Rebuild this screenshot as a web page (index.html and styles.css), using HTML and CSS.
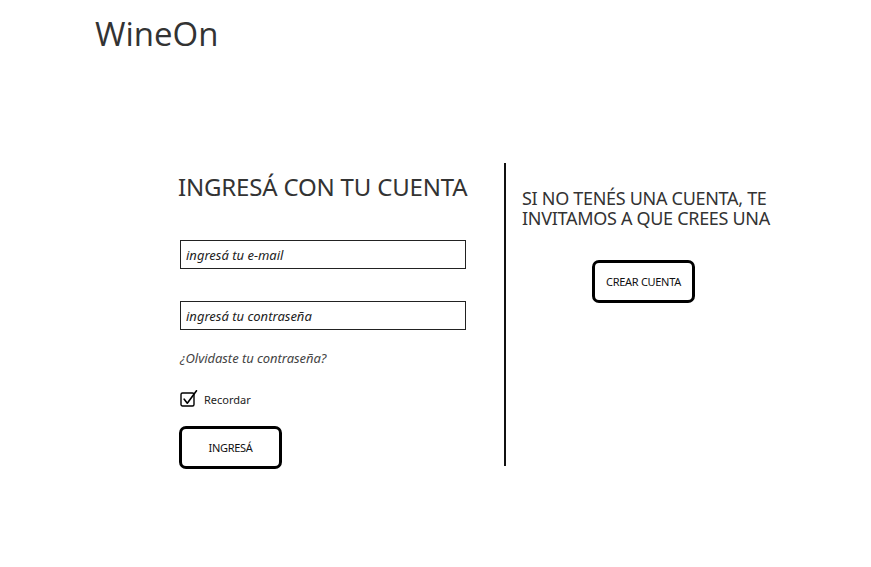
FILE: index.html
```html
<!DOCTYPE html>
<html lang="es">
<head>
<meta charset="utf-8">
<title>WineOn</title>
<link rel="stylesheet" href="styles.css">
</head>
<body>
<header class="header">
  <h1 class="logo">WineOn</h1>
</header>
<main class="main">
  <section class="login">
    <h2 class="login-title">INGRESÁ CON TU CUENTA</h2>
    <input class="field" type="text" placeholder="ingresá tu e-mail">
    <input class="field field-pass" type="password" placeholder="ingresá tu contraseña">
    <a class="forgot" href="#">¿Olvidaste tu contraseña?</a>
    <label class="remember">
      <svg class="check" width="18" height="18" viewBox="0 0 18 18">
        <rect x="1" y="3" width="13" height="13" rx="1.5" fill="none" stroke="#000" stroke-width="1.4"/>
        <path d="M4.2 9.2 L7.3 13.2 L16.5 0.8" fill="none" stroke="#000" stroke-width="1.6" stroke-linecap="round" stroke-linejoin="round"/>
      </svg>
      <span>Recordar</span>
    </label>
    <button class="btn">INGRESÁ</button>
  </section>
  <div class="divider"></div>
  <section class="signup">
    <h2 class="signup-title">SI NO TENÉS UNA CUENTA, TE INVITAMOS A QUE CREES UNA</h2>
    <button class="btn btn-create">CREAR CUENTA</button>
  </section>
</main>
</body>
</html>
```

FILE: styles.css
```css
* { box-sizing: border-box; }
body {
  margin: 0;
  background: #fff;
  font-family: "Noto Sans", "Open Sans", sans-serif;
  color: #333;
}
.header {
  padding: 12px 0 0 95px;
}
.logo {
  margin: 0;
  font-family: "Open Sans", sans-serif;
  font-weight: 400;
  font-size: 33px;
  line-height: 44px;
  color: #333;
}
.main {
  display: flex;
  align-items: flex-start;
  padding: 107px 0 0 178px;
}
.login {
  width: 306px;
  display: flex;
  flex-direction: column;
  align-items: flex-start;
  padding-top: 8px;
}
.login-title {
  margin: 0;
  font-family: "Noto Sans", sans-serif;
  font-weight: 400;
  font-size: 24px;
  line-height: 32px;
  letter-spacing: -0.18px;
  color: #333;
  white-space: nowrap;
}
.field {
  margin: 37px 0 0 2px;
  width: 286px;
  height: 29px;
  border: 1px solid #222;
  padding: 0 5px;
  font-family: "Noto Sans", sans-serif;
  font-style: italic;
  font-size: 13px;
  color: #222;
  outline: none;
}
.field::placeholder { color: #222; opacity: 1; }
.field-pass { margin-top: 32px; }
.forgot {
  margin: 19px 0 0 2px;
  font-style: italic;
  font-size: 13px;
  color: #444;
  text-decoration: none;
  letter-spacing: -0.05px;
}
.remember {
  margin: 23px 0 0 2px;
  display: flex;
  align-items: center;
  gap: 6px;
  font-size: 11px;
  color: #222;
}
.check { display: block; }
.btn {
  margin: 18px 0 0 1px;
  width: 103px;
  height: 43px;
  border: 3px solid #000;
  border-radius: 7px;
  background: #fff;
  font-family: "Noto Sans", sans-serif;
  font-size: 11px;
  color: #111;
  letter-spacing: -0.3px;
  padding: 0;
  cursor: pointer;
}
.divider {
  width: 2px;
  height: 303px;
  background: #111;
  margin: 0 0 0 20px;
}
.signup {
  margin-left: 16px;
  padding-top: 25px;
  width: 270px;
  display: flex;
  flex-direction: column;
  align-items: flex-start;
}
.signup-title {
  margin: 0;
  font-weight: 400;
  font-size: 18px;
  line-height: 20px;
  letter-spacing: -0.3px;
  color: #333;
}
.btn-create {
  margin: 32px 0 0 70px;
}
```
